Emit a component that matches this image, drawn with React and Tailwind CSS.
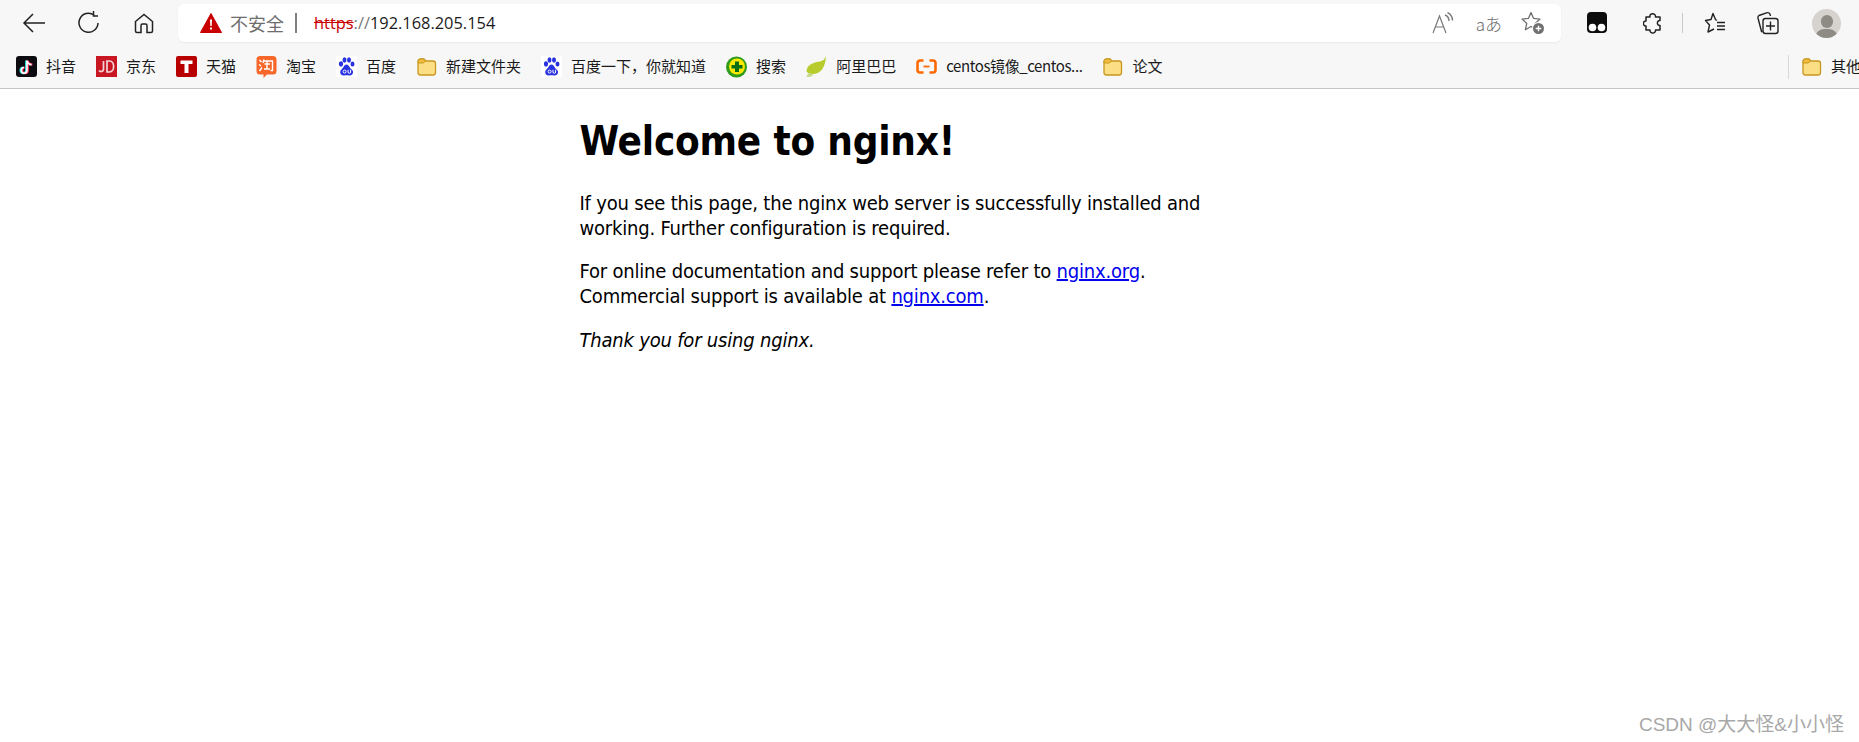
// Edge browser chrome with the default nginx welcome page below it

const Folder = () => (
  <svg width="21" height="21" viewBox="0 0 21 21">
    <path d="M2 5.5 A2.5 2.5 0 0 1 4.5 3 H8 L10 5 H17 A2.5 2.5 0 0 1 19.5 7.5 V16.5 A2.5 2.5 0 0 1 17 19 H4.5 A2.5 2.5 0 0 1 2 16.5 Z" fill="#fcdf85" stroke="#c8971f" strokeWidth="1.3" />
    <path d="M2 7 V5.5 A2.5 2.5 0 0 1 4.5 3 H7.5 L9.5 5 L7.5 7 Z" fill="#f0bd3c" stroke="#c8971f" strokeWidth="1" />
  </svg>
)

const Baidu = () => (
  <svg width="21" height="21" viewBox="0 0 21 21">
    <rect width="21" height="21" fill="#fff" />
    <g fill="#2932e1">
      <ellipse cx="5" cy="8" rx="2.1" ry="2.7" />
      <ellipse cx="8.5" cy="4" rx="2" ry="2.7" />
      <ellipse cx="13" cy="4" rx="2" ry="2.7" />
      <ellipse cx="16.5" cy="8" rx="2" ry="2.5" />
      <path d="M10.5 8.5 C8 8.5 7.5 12 5.5 13.5 C3 15.5 4.5 20 8 19.5 C10 19.2 11 19 13 19.5 C16.5 20.3 18.5 16 15.8 13.6 C13.5 12 13 8.5 10.5 8.5 Z" />
    </g>
    <circle cx="8.6" cy="15.6" r="1.5" fill="none" stroke="#fff" strokeWidth="1" />
    <path d="M12 13.8 V16 A1.3 1.3 0 0 0 14.6 16 V13.8" fill="none" stroke="#fff" strokeWidth="1" />
  </svg>
)

const Douyin = () => (
  <svg width="21" height="21" viewBox="0 0 21 21">
    <rect width="21" height="21" rx="3" fill="#0b0b10" />
    <path d="M11 4 V13.6 A2.8 2.8 0 1 1 8 10.9 M11 4 C11.4 6.5 13 7.8 15.6 8" fill="none" stroke="#25f4ee" strokeWidth="2.2" transform="translate(-0.8 0.6)" />
    <path d="M11 4 V13.6 A2.8 2.8 0 1 1 8 10.9 M11 4 C11.4 6.5 13 7.8 15.6 8" fill="none" stroke="#fe2c55" strokeWidth="2.2" transform="translate(0.8 0.6)" />
    <path d="M11 4 V13.6 A2.8 2.8 0 1 1 8 10.9 M11 4 C11.4 6.5 13 7.8 15.6 8" fill="none" stroke="#fff" strokeWidth="1.6" transform="translate(0 0.6)" />
  </svg>
)

const Jd = () => (
  <svg width="21" height="21" viewBox="0 0 21 21">
    <rect width="21" height="21" fill="#c91623" />
    <path d="M7.5 5 V13.5 A2.5 2.5 0 0 1 3 14.5" fill="none" stroke="#f3d5d7" strokeWidth="1.7" />
    <path d="M11 5 H13.5 C19 5 19 16 13.5 16 H11 Z" fill="none" stroke="#f3d5d7" strokeWidth="1.7" />
  </svg>
)

const Tmall = () => (
  <svg width="21" height="21" viewBox="0 0 21 21">
    <rect width="21" height="21" rx="2" fill="#b80000" />
    <path d="M4.5 4.5 H16.5 V8 H12.5 V17 H8.5 V8 H4.5 Z" fill="#fff" />
  </svg>
)

const Taobao = () => (
  <svg width="21" height="24" viewBox="0 0 21 24">
    <path d="M4 1 H17 A3.5 3.5 0 0 1 20.5 4.5 V16 A3.5 3.5 0 0 1 17 19.5 H11 L7.5 23 V19.5 H4 A3.5 3.5 0 0 1 .5 16 V4.5 A3.5 3.5 0 0 1 4 1 Z" fill="#f7672a" />
    <path d="M3.5 5 L5.5 7 M3 9.5 L5 11 M3.5 16 L6 12.5 M8 4.5 L7 8 M8 6 H16.5 V15.5 H14.5 M8.5 9 H14 M11 6 V14 M8 14 H14" fill="none" stroke="#fff" strokeWidth="1.4" />
  </svg>
)

const Sogou = () => (
  <svg width="21" height="22" viewBox="0 0 21 22">
    <circle cx="10.5" cy="11" r="10.5" fill="#2f9b1b" />
    <circle cx="11" cy="10.5" r="8" fill="#fde800" />
    <path d="M9 5.5 H13 V9 H16.5 V12.5 H13 V16 H9 V12.5 H5.5 V9 H9 Z" fill="#0b6d16" />
  </svg>
)

const Leaf = () => (
  <svg width="21" height="23" viewBox="0 0 21 23">
    <path d="M20 1 C19.5 12 15 19 6.5 19 C3.5 19 1.5 18 0.5 16.5 C0.5 9 9 7 14 6.5 C17 6 19 4 20 1 Z" fill="#b8cc2e" />
    <path d="M0.5 22 C1 20 1.5 19 3 18 C6 19 9 20 6 21 C4 22 2 22 0.5 22 Z" fill="#c7d98a" />
  </svg>
)

const Aliyun = () => (
  <svg width="21" height="21" viewBox="0 0 21 21">
    <path d="M7.5 4.5 H4 A2.5 2.5 0 0 0 1.5 7 V14 A2.5 2.5 0 0 0 4 16.5 H7.5 M13.5 4.5 H17 A2.5 2.5 0 0 1 19.5 7 V14 A2.5 2.5 0 0 1 17 16.5 H13.5" fill="none" stroke="#ff6a00" strokeWidth="2.6" />
    <path d="M7.5 10.5 H13.5" stroke="#ff6a00" strokeWidth="1.8" />
  </svg>
)

const bookmarks = [
  { icon: <Douyin />, label: '抖音' },
  { icon: <Jd />, label: '京东' },
  { icon: <Tmall />, label: '天猫' },
  { icon: <Taobao />, label: '淘宝' },
  { icon: <Baidu />, label: '百度' },
  { icon: <Folder />, label: '新建文件夹' },
  { icon: <Baidu />, label: '百度一下，你就知道' },
  { icon: <Sogou />, label: '搜索' },
  { icon: <Leaf />, label: '阿里巴巴' },
  { icon: <Aliyun />, label: 'centos镜像_centos...', tight: true },
  { icon: <Folder />, label: '论文' },
]

function Bookmark({ icon, label, tight }) {
  return (
    <div className="flex items-center gap-[9px] shrink-0">
      <span className="flex w-[21px] h-[24px] items-center justify-center">{icon}</span>
      <span className={tight ? 'text-[15px] tracking-[-0.4px] text-[#1a1a1a] whitespace-nowrap' : 'text-[15px] text-[#1a1a1a] whitespace-nowrap'}>{label}</span>
    </div>
  )
}

function Toolbar() {
  return (
    <div className="flex h-[44px] items-center">
      <div className="flex w-[178px] shrink-0 items-center pl-[22px]">
        <svg width="24" height="22" viewBox="0 0 24 22" fill="none" stroke="#222" strokeWidth="1.5">
          <path d="M23 11 H2 M11 2 L2 11 L11 20" />
        </svg>
        <svg className="ml-[32px]" width="22" height="24" viewBox="0 0 22 24" fill="none" stroke="#222" strokeWidth="1.5">
          <path d="M16 4 A9.5 9.5 0 1 0 20 12" />
          <path d="M16.5 0 V5 H21" transform="translate(-1 0)" />
        </svg>
        <svg className="ml-[34px]" width="20" height="21" viewBox="0 0 20 21" fill="none" stroke="#222" strokeWidth="1.5">
          <path d="M1.5 8.5 L10 1.5 L18.5 8.5 V18 A1.5 1.5 0 0 1 17 19.5 H13 V12.5 A1.5 1.5 0 0 0 11.5 11 H8.5 A1.5 1.5 0 0 0 7 12.5 V19.5 H3 A1.5 1.5 0 0 1 1.5 18 Z" />
        </svg>
      </div>

      <div className="flex h-[38px] w-[1383px] shrink-0 items-center rounded-[6px] bg-white pl-[22px] pr-[16px] shadow-[0_1px_2px_rgba(0,0,0,0.06)]">
        <svg width="22" height="20" viewBox="0 0 22 20">
          <path d="M11 0.5 L21.5 19.5 H0.5 Z" fill="#c80000" stroke="#c80000" strokeLinejoin="round" />
          <path d="M10 6.5 H12 L11.7 13 H10.3 Z M10 14.5 H12 V16.5 H10 Z" fill="#fff" />
        </svg>
        <span className="ml-2 text-[18px] text-[#6d6d6d]">不安全</span>
        <span className="ml-[11px] h-[20px] w-[2px] bg-[#808080]" />
        <span className="ml-[17px] text-[16.4px] text-[#1c1c1c] font-['Open_Sans','Noto_Sans',sans-serif]">
          <span className="text-[#c80000] line-through">https</span>
          <span className="text-[#777]">://</span>
          192.168.205.154
        </span>

        <div className="ml-auto flex items-center">
          <svg width="24" height="22" viewBox="0 0 24 22" fill="none" stroke="#7a7a7a" strokeWidth="1.2">
            <path d="M1 21 L7.5 4 L14 21 M3.5 15 H11.5" />
            <path d="M13 3 C15.5 4 17 6 17 9 M15.5 0.5 C18.5 2 20.5 5 20.5 8.5" strokeWidth="1.4" />
          </svg>
          <span className="ml-[20px] text-[17px] leading-none text-[#6f6f6f] font-light">aあ</span>
          <svg className="ml-[19px]" width="24" height="24" viewBox="0 0 24 24" fill="none">
            <path d="M10 1.5 L12.6 7.4 L19 8.1 L14.2 12.4 L15.6 18.7 L10 15.5 L4.4 18.7 L5.8 12.4 L1 8.1 L7.4 7.4 Z" stroke="#6f6f6f" strokeWidth="1.3" strokeLinejoin="round" />
            <circle cx="17.5" cy="17.5" r="6.5" fill="#fff" />
            <circle cx="17.5" cy="17.5" r="5.5" fill="#6f6f6f" />
            <path d="M17.5 14.7 V20.3 M14.7 17.5 H20.3" stroke="#fff" strokeWidth="1.4" />
          </svg>
        </div>
      </div>

      <div className="flex flex-1 items-center pl-[26px]">
        <svg width="20" height="24" viewBox="0 0 20 24">
          <rect y="1" width="20" height="21" rx="4" fill="#0d0d0d" />
          <circle cx="5.5" cy="16.5" r="3.8" fill="#fff" />
          <circle cx="14.5" cy="16.5" r="3.8" fill="#fff" />
        </svg>
        <svg className="ml-[36px]" width="20" height="24" viewBox="0 0 20 24" fill="none" stroke="#222" strokeWidth="1.5">
          <path d="M7 6 C6 1.5 13 1.5 12.5 6 H17 V9.5 C13.5 9 13.5 15 17 14.5 V19 H12.5 C13 23 6.5 23 7 19 H3 V15 C-0.5 15.5 -0.5 9.5 3 10 V6 Z" strokeLinejoin="round" />
        </svg>
        <span className="ml-[19px] h-[20px] w-px bg-[#c8c8c8]" />
        <svg className="ml-[21px]" width="22" height="24" viewBox="0 0 22 24" fill="none" stroke="#222" strokeWidth="1.4">
          <path d="M12.8 9.5 L11.5 8.5 L9 2.5 L7 8.5 L1.5 9.5 L5.5 14 L4 21 L10 18" strokeLinejoin="round" />
          <path d="M13 11.5 H21 M13 15 H21 M13 18.5 H21" />
        </svg>
        <svg className="ml-[31px]" width="22" height="24" viewBox="0 0 22 24" fill="none" stroke="#222" strokeWidth="1.4">
          <path d="M5.5 20.5 H4.5 L1 7 C0.8 6 1.2 5 2 4.5 L9.5 1.8 C11.5 1.2 13 2 13.5 5" />
          <rect x="6" y="7.5" width="15" height="15" rx="2.5" />
          <path d="M13.5 10.5 V19.5 M9 15 H18" />
        </svg>
        <div className="ml-[33px] flex h-[29px] w-[29px] flex-col items-center justify-end overflow-hidden rounded-full bg-[#d6d3ce]">
          <span className="mb-[1px] h-[13px] w-[12px] rounded-full bg-[#8e8a84]" />
          <span className="h-[9px] w-[23px] rounded-t-full bg-[#8e8a84]" />
        </div>
      </div>
    </div>
  )
}

function BookmarksBar() {
  return (
    <div className="flex h-[44px] items-center overflow-hidden border-b border-[#c4c4c4] pl-[16px]">
      <div className="flex items-center gap-[20px]">
        {bookmarks.map((b, i) => (
          <Bookmark key={i} icon={b.icon} label={b.label} tight={b.tight} />
        ))}
      </div>
      <div className="ml-auto flex w-[71px] shrink-0 items-center overflow-hidden border-l border-[#d8d8d8] pl-[12px]">
        <Bookmark icon={<Folder />} label="其他收藏夹" />
      </div>
    </div>
  )
}

export default function App() {
  return (
    <div className="relative h-[742px] w-[1859px] overflow-hidden bg-white font-['Noto_Sans_CJK_SC','Noto_Sans',sans-serif]">
      <div className="bg-[#f7f7f7] pt-[1px]">
        <Toolbar />
        <BookmarksBar />
      </div>

      <div className="mx-auto w-[700px] text-[20px] leading-[25px] tracking-[-0.2px] text-black font-['DejaVu_Sans_Condensed','DejaVu_Sans',sans-serif]">
        <h1 className="pt-[28px] pb-[26px] text-[40px] leading-[48px] font-bold">Welcome to nginx!</h1>
        <p className="mb-[18px] w-[640px]">If you see this page, the nginx web server is successfully installed and working. Further configuration is required.</p>
        <p className="mb-[19px]">
          For online documentation and support please refer to <a href="#" className="text-[#0000ee] underline">nginx.org</a>.
          <br />
          Commercial support is available at <a href="#" className="text-[#0000ee] underline">nginx.com</a>.
        </p>
        <p className="italic">Thank you for using nginx.</p>
      </div>

      {/* CSDN watermark */}
      <div className="absolute right-[15px] bottom-[3px] text-[19px] text-[#a8a8a8] font-['Liberation_Sans','Noto_Sans_CJK_SC',sans-serif]">
        CSDN @大大怪&amp;小小怪
      </div>
    </div>
  )
}
